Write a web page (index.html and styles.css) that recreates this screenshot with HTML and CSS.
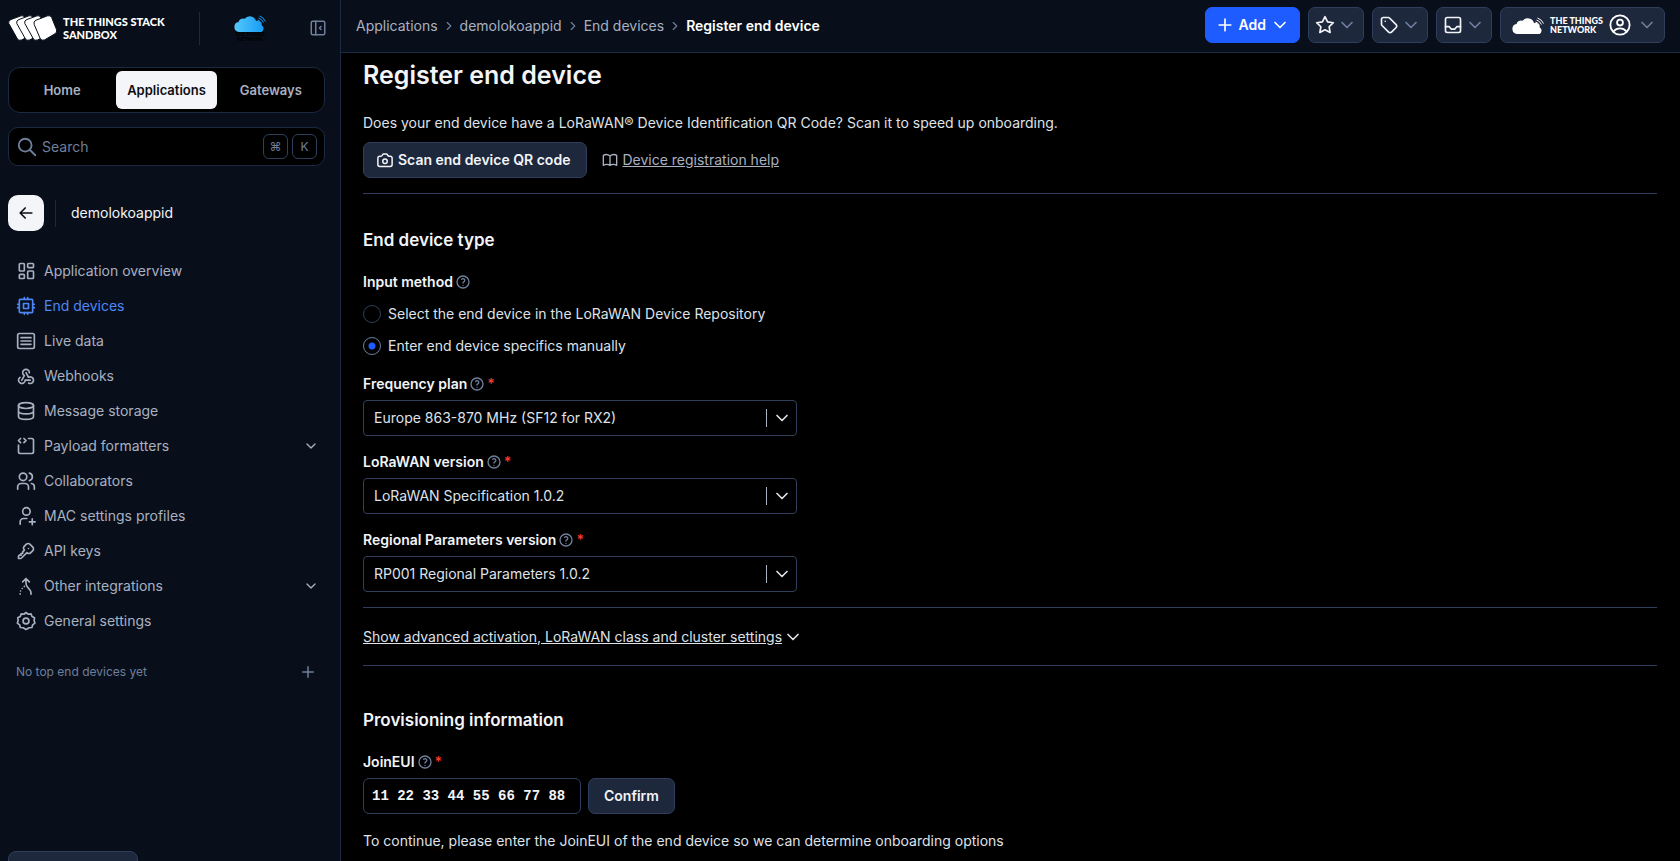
FILE: index.html
```html
<!DOCTYPE html>
<html lang="en">
<head>
<meta charset="utf-8">
<title>Register end device</title>
<link rel="stylesheet" href="styles.css">
</head>
<body>
<svg class="sprite" aria-hidden="true">
  <symbol id="chevron" viewBox="0 0 24 24"><path d="M6 9l6 6l6-6"/></symbol>
  <symbol id="chevron-right" viewBox="0 0 24 24"><path d="M9 6l6 6l-6 6"/></symbol>
  <symbol id="help" viewBox="0 0 24 24"><path d="M3 12a9 9 0 1 0 18 0a9 9 0 1 0-18 0M12 17v.01M12 13.5a1.5 1.5 0 0 1 1-1.5a2.6 2.6 0 1 0-3-4"/></symbol>
  <symbol id="plus" viewBox="0 0 24 24"><path d="M12 5v14M5 12h14"/></symbol>
</svg>
<div class="app">
  <aside class="sidebar">
    <div class="brand">
      <svg class="stack-logo" viewBox="0 0 49 26" aria-hidden="true">
        <g class="stack-card">
          <path id="card" d="M3 4.500L13 .8Q15.800 0 16.800 2.700L22.800 17Q23.800 19.600 21.500 21L13.500 25Q10.500 26.200 9.200 23.500L.8 8.500Q-.2 5.700 3 4.500Z"/>
          <use href="#card" x="8"/><use href="#card" x="16"/>
          <path d="M28 5.200L39.500 .8Q42.500 -.1 43.700 2.600L48.500 14.500Q49.400 17.300 47 18.800L36.500 24.900Q33.600 26.200 32.200 23.500L26.200 9.500Q25 6.400 28 5.200Z"/>
        </g>
      </svg>
      <span class="brand-name">THE THINGS STACK<br>SANDBOX</span>
      <span class="brand-rule"></span>
      <span class="network">
        <svg class="network-cloud" viewBox="0 0 32 17" aria-hidden="true">
          <defs><linearGradient id="sky" x1="0" y1="0" x2="1" y2="0"><stop offset="0" stop-color="#55c8fb"/><stop offset="1" stop-color="#169bf5"/></linearGradient></defs>
          <path fill="url(#sky)" d="M5 17a5 5 0 0 1-.5-9.900a4.500 4.500 0 0 1 6.200-3.300a6.500 6.500 0 0 1 11.400 2.200a4.500 4.500 0 0 1 5.700 4.400a3.800 3.800 0 0 1-.3 6.600z"/>
          <path class="wave" d="M23.500 5a6 6 0 0 1 4 3.500M24.500 3a8 8 0 0 1 5 4.500M25.500 1a10 10 0 0 1 6 5.500"/>
        </svg>
        <span class="network-name">THE THINGS<br>NETWORK</span>
      </span>
      <button class="collapse" aria-label="Collapse sidebar"><svg class="icon" viewBox="0 0 24 24"><rect x="3" y="3" width="18" height="18" rx="2"/><path d="M9 3v18M16 10l-2 2l2 2"/></svg></button>
    </div>
    <nav class="tabs">
      <a class="tab" href="#">Home</a><a class="tab tab-active" href="#">Applications</a><a class="tab" href="#">Gateways</a>
    </nav>
    <label class="search">
      <svg class="icon" viewBox="0 0 24 24"><path d="M3 10a7 7 0 1 0 14 0a7 7 0 1 0-14 0M21 21l-6-6"/></svg>
      <input type="text" placeholder="Search" aria-label="Search">
      <kbd>⌘</kbd><kbd>K</kbd>
    </label>
    <div class="entity">
      <a class="back" href="#" aria-label="Back"><svg class="icon" viewBox="0 0 24 24"><path d="M5 12h14M5 12l6 6M5 12l6-6"/></svg></a>
      <span class="entity-rule"></span>
      <span>demolokoappid</span>
    </div>
    <nav class="menu">
      <a class="item" href="#"><svg class="icon" viewBox="0 0 24 24"><path d="M5 3h4a1 1 0 0 1 1 1v7a1 1 0 0 1-1 1H5a1 1 0 0 1-1-1V4a1 1 0 0 1 1-1zM5 16h4a1 1 0 0 1 1 1v3a1 1 0 0 1-1 1H5a1 1 0 0 1-1-1v-3a1 1 0 0 1 1-1zM15 12h5a1 1 0 0 1 1 1v7a1 1 0 0 1-1 1h-5a1 1 0 0 1-1-1v-7a1 1 0 0 1 1-1zM15 3h5a1 1 0 0 1 1 1v3a1 1 0 0 1-1 1h-5a1 1 0 0 1-1-1V4a1 1 0 0 1 1-1z"/></svg>Application overview</a>
      <a class="item item-active" href="#"><svg class="icon" viewBox="0 0 24 24"><rect x="4" y="4" width="16" height="16" rx="1"/><path d="M9 9h6v6H9zM2 10h2M2 14h2M10 2v2M14 2v2M22 10h-2M22 14h-2M14 22v-2M10 22v-2"/></svg>End devices</a>
      <a class="item" href="#"><svg class="icon" viewBox="0 0 24 24"><rect x="2" y="3" width="20" height="18" rx="2"/><path d="M6 8h12M6 12h12M6 16h12"/></svg>Live data</a>
      <a class="item" href="#"><svg class="icon" viewBox="0 0 24 24"><path d="M4.876 13.610A4 4 0 1 0 11 17h6M15.066 20.502A4 4 0 1 0 17 13c-.706 0-1.424.179-2 .500L12 8M16 8a4 4 0 1 0-8 0c0 1.506.770 2.818 2 3.500L7 17"/></svg>Webhooks</a>
      <a class="item" href="#"><svg class="icon" viewBox="0 0 24 24"><ellipse cx="12" cy="5.500" rx="9" ry="3.500"/><path d="M3 5.500v13c0 2 4 3.500 9 3.500s9-1.500 9-3.500v-13M3 12c0 2 4 3.500 9 3.500s9-1.500 9-3.500"/></svg>Message storage</a>
      <a class="item" href="#"><svg class="icon" viewBox="0 0 24 24"><path d="M15 3h4a2 2 0 0 1 2 2v14a2 2 0 0 1-2 2H5a2 2 0 0 1-2-2v-8M5.500 3L3 5.500L5.500 8M9.500 3L12 5.500L9.500 8"/></svg>Payload formatters<svg class="icon caret" viewBox="0 0 24 24"><use href="#chevron"/></svg></a>
      <a class="item" href="#"><svg class="icon" viewBox="0 0 24 24"><path d="M4 7a4.500 4.500 0 1 0 9 0a4.500 4.500 0 1 0-9 0M2 22v-3a4 4 0 0 1 4-4h5a4 4 0 0 1 4 4v3M16 2.500a4.600 4.600 0 0 1 0 9M22 22v-3a4 4 0 0 0-3.500-4"/></svg>Collaborators</a>
      <a class="item" href="#"><svg class="icon" viewBox="0 0 24 24"><path d="M8 6.500a4.500 4.500 0 1 0 9 0a4.500 4.500 0 1 0-9 0M5 22v-3a4 4 0 0 1 4-4h4M16 19h7M19.500 15.500v7"/></svg>MAC settings profiles</a>
      <a class="item" href="#"><svg class="icon" viewBox="0 0 24 24"><path d="M16.555 3.843l3.602 3.602a2.877 2.877 0 0 1 0 4.069l-2.643 2.643a2.877 2.877 0 0 1-4.069 0l-.301-.301l-6.558 6.558a2 2 0 0 1-1.239.578L5.172 21H3v-2.172a2 2 0 0 1 .467-1.284l.119-.130L4 17h2v-2h2v-2l2.144-2.144l-.301-.301a2.877 2.877 0 0 1 0-4.069l2.643-2.643a2.877 2.877 0 0 1 4.069 0zM15 9h.01"/></svg>API keys</a>
      <a class="item" href="#"><svg class="icon" viewBox="0 0 24 24"><path d="M8 7l4-4l4 4M12 3v5.400c0 1.600.5 3.200 1.500 4.400l3 3.700a6 6 0 0 1 1.500 4v1.500M10 12.500v.01M7.500 15v.01M5.500 18v.01M5 21.500v.01"/></svg>Other integrations<svg class="icon caret" viewBox="0 0 24 24"><use href="#chevron"/></svg></a>
      <a class="item" href="#"><svg class="icon" viewBox="0 0 24 24"><path d="M12 1.800l2.700 2.100l3.300-.500l1.200 3.200l3 1.400l-.500 3.400l1 3.200l-2.700 2l-.900 3.200l-3.400.300L12 22.200l-3.400-2.100l-3.400-.300l-.900-3.200l-2.700-2l1-3.200l-.500-3.400l3-1.400l1.200-3.200l3.300.500z"/><circle cx="12" cy="12" r="3.500"/></svg>General settings</a>
    </nav>
    <div class="empty"><span>No top end devices yet</span><button class="empty-add" aria-label="Add end device"><svg class="icon" viewBox="0 0 24 24"><use href="#plus"/></svg></button></div>
    <button class="footer-button" aria-label="Resources"></button>
  </aside>

  <div class="content">
    <header class="topbar">
      <nav class="crumbs">
        <a href="#">Applications</a><svg class="icon" viewBox="0 0 24 24"><use href="#chevron-right"/></svg>
        <a href="#">demolokoappid</a><svg class="icon" viewBox="0 0 24 24"><use href="#chevron-right"/></svg>
        <a href="#">End devices</a><svg class="icon" viewBox="0 0 24 24"><use href="#chevron-right"/></svg>
        <span class="crumb-current">Register end device</span>
      </nav>
      <div class="actions">
        <button class="btn btn-primary"><svg class="icon" viewBox="0 0 24 24"><use href="#plus"/></svg>Add<svg class="icon caret" viewBox="0 0 24 24"><use href="#chevron"/></svg></button>
        <button class="btn btn-icon" aria-label="Bookmarks"><svg class="icon" viewBox="0 0 24 24"><path d="M12 17.750l-6.172 3.245l1.179-6.873l-5-4.867l6.900-1l3.086-6.253l3.086 6.253l6.900 1l-5 4.867l1.179 6.873z"/></svg><svg class="icon caret" viewBox="0 0 24 24"><use href="#chevron"/></svg></button>
        <button class="btn btn-icon" aria-label="Labels"><svg class="icon" viewBox="0 0 24 24"><path d="M7.500 7.500h.01M3 5v6.200a2 2 0 0 0 .6 1.400l8 8a2.400 2.400 0 0 0 3.400 0l5.600-5.600a2.400 2.400 0 0 0 0-3.400l-8-8a2 2 0 0 0-1.400-.6H5a2 2 0 0 0-2 2z"/></svg><svg class="icon caret" viewBox="0 0 24 24"><use href="#chevron"/></svg></button>
        <button class="btn btn-icon" aria-label="Inbox"><svg class="icon" viewBox="0 0 24 24"><rect x="3" y="3" width="18" height="18" rx="2"/><path d="M3 14h4.500l2.500 3h4l2.500-3H21"/></svg><svg class="icon caret" viewBox="0 0 24 24"><use href="#chevron"/></svg></button>
        <button class="btn btn-user">
          <svg class="user-cloud" viewBox="0 0 32 17" aria-hidden="true">
            <path fill="currentColor" d="M5 17a5 5 0 0 1-.5-9.900a4.500 4.500 0 0 1 6.200-3.300a6.500 6.500 0 0 1 11.400 2.200a4.500 4.500 0 0 1 5.700 4.400a3.800 3.800 0 0 1-.3 6.600z"/>
            <path class="wave" d="M23.500 5a6 6 0 0 1 4 3.500M24.500 3a8 8 0 0 1 5 4.500M25.500 1a10 10 0 0 1 6 5.500"/>
          </svg>
          <span class="user-network">THE THINGS<br>NETWORK</span>
          <svg class="icon avatar" viewBox="0 0 24 24"><circle cx="12" cy="12" r="10.500"/><circle cx="12" cy="9.300" r="3.200"/><path d="M5 19c3.500-4.500 10.500-4.500 14 0"/></svg>
          <svg class="icon caret" viewBox="0 0 24 24"><use href="#chevron"/></svg>
        </button>
      </div>
    </header>

    <main class="page">
      <h1>Register end device</h1>
      <p class="intro">Does your end device have a LoRaWAN® Device Identification QR Code? Scan it to speed up onboarding.</p>
      <div class="scan">
        <button class="btn btn-scan"><svg class="icon" viewBox="0 0 24 24"><path d="M5 7h1.500a2 2 0 0 0 1.700-1l.9-1.500A1 1 0 0 1 10 4h4a1 1 0 0 1 .9.500l.9 1.500a2 2 0 0 0 1.700 1H19a2.500 2.500 0 0 1 2.500 2.500V18a2.500 2.500 0 0 1-2.500 2.500H5A2.500 2.500 0 0 1 2.500 18V9.500A2.500 2.500 0 0 1 5 7z"/><circle cx="12" cy="13.500" r="3"/></svg>Scan end device QR code</button>
        <a class="help-link" href="#"><svg class="icon" viewBox="0 0 24 24"><path d="M12 6v14c-3-1.600-7-1.600-10 0V5c3-1.600 7-1.600 10 1c3-2.600 7-2.600 10-1v15c-3-1.600-7-1.600-10 0"/></svg><span>Device registration help</span></a>
      </div>
      <hr>
      <h2>End device type</h2>
      <fieldset class="method">
        <legend class="label">Input method<svg class="icon" viewBox="0 0 24 24"><use href="#help"/></svg></legend>
        <label class="option"><input type="radio" name="method">Select the end device in the LoRaWAN Device Repository</label>
        <label class="option"><input type="radio" name="method" checked>Enter end device specifics manually</label>
      </fieldset>
      <div class="field">
        <label class="label" for="plan">Frequency plan<svg class="icon" viewBox="0 0 24 24"><use href="#help"/></svg><span class="required">*</span></label>
        <div class="select"><select id="plan"><option>Europe 863-870 MHz (SF12 for RX2)</option></select><svg class="icon" viewBox="0 0 24 24"><use href="#chevron"/></svg></div>
      </div>
      <div class="field">
        <label class="label" for="version">LoRaWAN version<svg class="icon" viewBox="0 0 24 24"><use href="#help"/></svg><span class="required">*</span></label>
        <div class="select"><select id="version"><option>LoRaWAN Specification 1.0.2</option></select><svg class="icon" viewBox="0 0 24 24"><use href="#chevron"/></svg></div>
      </div>
      <div class="field">
        <label class="label" for="regional">Regional Parameters version<svg class="icon" viewBox="0 0 24 24"><use href="#help"/></svg><span class="required">*</span></label>
        <div class="select"><select id="regional"><option>RP001 Regional Parameters 1.0.2</option></select><svg class="icon" viewBox="0 0 24 24"><use href="#chevron"/></svg></div>
      </div>
      <div class="advanced"><button class="advanced-toggle"><span>Show advanced activation, LoRaWAN class and cluster settings</span><svg class="icon" viewBox="0 0 24 24"><use href="#chevron"/></svg></button></div>
      <h2>Provisioning information</h2>
      <div class="field">
        <label class="label" for="join">JoinEUI<svg class="icon" viewBox="0 0 24 24"><use href="#help"/></svg><span class="required">*</span></label>
        <div class="join"><input id="join" type="text" value="11 22 33 44 55 66 77 88"><button class="btn btn-confirm">Confirm</button></div>
      </div>
      <p class="hint">To continue, please enter the JoinEUI of the end device so we can determine onboarding options</p>
    </main>
  </div>
</div>
</body>
</html>
```
FILE: styles.css
```css
:root {
  --bg: #000;
  --panel: #080f1a;
  --line: #1c2a41;
  --raised: #1d283d;
  --raised-line: #2f3f5b;
  --text: #f2f4f8;
  --soft: #a9b1c1;
  --muted: #6f7f9c;
  --blue: #1f5cff;
}
* { box-sizing: border-box; }
body {
  margin: 0;
  background: var(--bg);
  color: var(--text);
  font: 14px/20px Inter, "Open Sans", sans-serif;
}
a { color: inherit; text-decoration: none; }
button, input, select { font: inherit; color: inherit; }
button { cursor: pointer; }
.sprite { display: none; }
.icon {
  width: 20px;
  height: 20px;
  flex: none;
  fill: none;
  stroke: currentColor;
  stroke-width: 2;
  stroke-linecap: round;
  stroke-linejoin: round;
}
.app { display: flex; height: 100vh; overflow: hidden; }

/* Sidebar */
.sidebar {
  display: flex;
  flex-direction: column;
  flex: none;
  width: 341px;
  padding: 0 15px 0 8px;
  overflow: hidden;
  background: var(--panel);
  border-right: 1px solid var(--line);
}
.brand { display: flex; align-items: center; height: 53px; padding-top: 3px; margin-bottom: 14px; flex: none; }
.stack-logo { width: 49px; height: 26px; margin-right: 6px; }
.stack-card { fill: #fff; stroke: var(--panel); stroke-width: 1; }
.brand-name { font: 900 11px/13px Lato, sans-serif; color: #fff; width: 136px; }
.brand-rule { width: 1px; height: 33px; background: var(--line); }
.network { display: flex; flex-direction: column; align-items: center; margin: 0 auto 0 34px; }
.network-cloud { width: 32px; height: 17px; overflow: visible; }
.wave { fill: none; stroke: currentColor; stroke-width: 1; }
.network-cloud .wave { stroke: #169bf5; }
.network-name { font: 900 5px/5px Lato, sans-serif; color: #000; text-align: center; }
.collapse { display: flex; padding: 0; border: 0; background: none; color: var(--muted); }
.collapse .icon { width: 18px; height: 18px; margin-right: -2px; }
.tabs {
  display: grid;
  grid-template-columns: repeat(3, 1fr);
  gap: 4px;
  padding: 3px;
  margin-bottom: 14px;
  background: var(--bg);
  border: 1px solid var(--line);
  border-radius: 12px;
}
.tab {
  padding: 9px 0;
  border-radius: 6px;
  color: var(--soft);
  font-size: 13px;
  font-weight: 600;
  text-align: center;
}
.tab-active { background: #f4f5f9; color: #0b0e14; }
.search {
  display: flex;
  align-items: center;
  gap: 4px;
  height: 39px;
  flex: none;
  padding: 0 7px;
  background: var(--bg);
  border: 1px solid var(--line);
  border-radius: 10px;
  color: var(--muted);
}
.search .icon { width: 22px; height: 22px; }
.search input { flex: 1; min-width: 0; padding: 0; border: 0; background: none; outline: 0; }
.search input::placeholder { color: var(--muted); opacity: 1; }
kbd {
  width: 25px;
  height: 25px;
  border: 1px solid var(--raised-line);
  border-radius: 6px;
  font: 12px/23px Inter, "DejaVu Sans", sans-serif;
  text-align: center;
}
.entity { display: flex; align-items: center; margin: 29px 0 22px; }
.back {
  display: grid;
  place-items: center;
  width: 36px;
  height: 36px;
  border-radius: 10px;
  background: #f4f5f9;
  color: #0b0e14;
}
.back .icon { width: 20px; height: 20px; }
.entity-rule { width: 1px; height: 27px; margin: 0 15px 0 11px; background: var(--line); }
.menu { display: flex; flex-direction: column; color: var(--soft); }
.item { display: flex; align-items: center; height: 35px; padding: 0 6px 0 8px; gap: 8px; }
.item-active { color: #4f86f7; }
.item .caret { width: 16px; height: 16px; margin-left: auto; }
.empty {
  display: flex;
  align-items: center;
  justify-content: space-between;
  margin-top: 24px;
  padding: 0 8px;
  color: var(--muted);
  font-size: 12px;
}
.empty-add { display: flex; padding: 0; border: 0; background: none; }
.empty-add .icon { width: 18px; height: 18px; }
.footer-button {
  flex: none;
  width: 130px;
  height: 36px;
  margin: auto 0 -26px;
  background: var(--raised);
  border: 1px solid var(--raised-line);
  border-radius: 8px;
}

/* Header */
.content { flex: 1; min-width: 0; }
.topbar {
  display: flex;
  align-items: center;
  justify-content: space-between;
  height: 53px;
  padding: 0 15px;
  background: var(--panel);
  border-bottom: 1px solid var(--line);
}
.crumbs { display: flex; align-items: center; gap: 4px; color: var(--soft); }
.crumbs .icon { width: 14px; height: 14px; color: var(--muted); }
.crumb-current { color: #fff; font-weight: 600; }
.actions { display: flex; gap: 8px; margin-bottom: 2px; }
.btn {
  display: flex;
  align-items: center;
  height: 36px;
  padding: 0 12px;
  gap: 4px;
  background: var(--raised);
  border: 1px solid var(--raised-line);
  border-radius: 7px;
  font-weight: 600;
  white-space: nowrap;
}
.btn-primary { background: var(--blue); border-color: var(--blue); color: #fff; padding: 0 9px; }
.btn-icon { padding: 0 6px; gap: 2px; }
.btn-icon .caret, .btn-user .caret { color: var(--muted); }
.btn-user { padding: 0 7px 0 11px; gap: 6px; color: #fff; }
.user-cloud { width: 32px; height: 17px; overflow: visible; }
.user-network { font: 900 9px/9px Lato, sans-serif; text-align: left; }
.avatar { width: 22px; height: 22px; }

/* Page */
.page { padding: 7px 23px 0 22px; }
h1 { margin: 0 0 23px; font-size: 25px; line-height: 30px; font-weight: 600; }
h2 { margin: 0 0 20px; font-size: 17px; line-height: 24px; font-weight: 600; }
p { margin: 0; color: #dfe2e8; }
.intro { margin-bottom: 9px; }
.scan { display: flex; align-items: center; gap: 15px; }
.btn-scan { padding: 0 16px 0 12px; }
.btn-scan .icon { width: 18px; height: 18px; }
.help-link { display: flex; align-items: center; gap: 4px; color: var(--soft); }
.help-link span { text-decoration: underline; }
.help-link .icon { width: 16px; height: 16px; }
hr { height: 1px; margin: 15px 0 34px; border: 0; background: var(--raised-line); }
.label { display: flex; align-items: center; gap: 2px; padding: 0; font-weight: 600; }
.label .icon { width: 16px; height: 16px; color: var(--muted); }
.required { color: #f33a2f; }
.method { margin: 0 0 18px; padding: 0; border: 0; }
.option { display: flex; align-items: center; gap: 7px; margin-top: 12px; color: #dfe2e8; }
.option input {
  appearance: none;
  width: 18px;
  height: 18px;
  margin: 0;
  border: 1px solid var(--raised-line);
  border-radius: 50%;
}
.option input:checked {
  border-color: var(--muted);
  background: radial-gradient(circle, var(--blue) 3px, transparent 4px);
}
.field + .field { margin-top: 16px; }
.select { position: relative; max-width: 434px; margin-top: 6px; }
.select select {
  display: block;
  appearance: none;
  width: 100%;
  height: 36px;
  padding: 0 40px 0 10px;
  background: var(--bg);
  border: 1px solid var(--raised-line);
  border-radius: 4px;
  color: #dfe2e8;
}
.select::after {
  content: "";
  position: absolute;
  top: 9px;
  right: 30px;
  width: 1px;
  height: 18px;
  background: var(--soft);
}
.select .icon { position: absolute; top: 8px; right: 5px; width: 20px; height: 20px; color: #dfe2e8; pointer-events: none; }
.advanced {
  margin: 15px 0 42px;
  padding: 19px 0 18px;
  border: solid var(--raised-line);
  border-width: 1px 0;
}
.advanced-toggle { display: flex; align-items: center; gap: 1px; padding: 0; border: 0; background: none; color: #dfe2e8; }
.advanced-toggle span { text-decoration: underline; }
.join { display: flex; gap: 7px; margin-top: 6px; }
.join input {
  width: 218px;
  height: 36px;
  padding: 0 8px;
  background: var(--bg);
  border: 1px solid var(--raised-line);
  border-radius: 6px;
  font-family: "Liberation Mono", monospace;
  font-weight: 700;
}
.btn-confirm { padding: 0 15px; }
.hint { margin-top: 17px; }
```
